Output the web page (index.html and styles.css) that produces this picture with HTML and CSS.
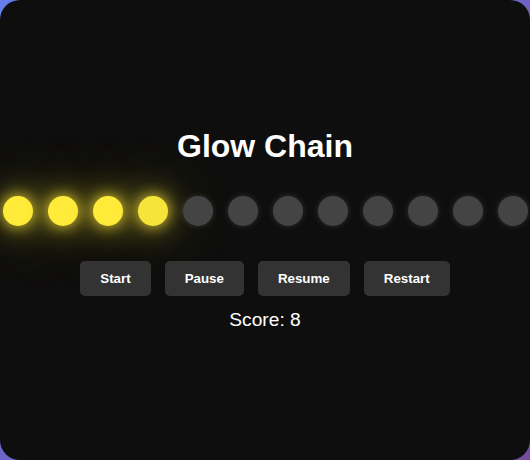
FILE: index.html
```html
<!DOCTYPE html>
<html lang="en">
<head>
<meta charset="utf-8">
<title>Glow Chain</title>
<link rel="stylesheet" href="styles.css">
</head>
<body>
<div class="app">
  <h1 class="title">Glow Chain</h1>
  <div class="chain">
    <span class="dot on"></span>
    <span class="dot on"></span>
    <span class="dot on"></span>
    <span class="dot on fading"></span>
    <span class="dot"></span>
    <span class="dot"></span>
    <span class="dot"></span>
    <span class="dot"></span>
    <span class="dot"></span>
    <span class="dot"></span>
    <span class="dot"></span>
    <span class="dot"></span>
  </div>
  <div class="controls">
    <button class="btn">Start</button>
    <button class="btn">Pause</button>
    <button class="btn">Resume</button>
    <button class="btn">Restart</button>
  </div>
  <p class="score">Score: 8</p>
</div>
</body>
</html>
```
FILE: styles.css
```css
html, body {
  margin: 0;
  height: 100%;
}
body {
  background: linear-gradient(135deg, #667eea 0%, #764ba2 100%);
  font-family: "Liberation Sans", Arial, sans-serif;
}
.app {
  height: 460px;
  width: 530px;
  box-sizing: border-box;
  background: #0e0e0e;
  border-radius: 20px;
  overflow: hidden;
  display: flex;
  flex-direction: column;
  align-items: center;
  justify-content: center;
  color: #fff;
}
.title {
  margin: 0 0 31px;
  font-size: 32px;
  font-weight: bold;
  line-height: normal;
}
.chain {
  display: flex;
  justify-content: center;
  gap: 15px;
  margin-bottom: 35px;
}
.dot {
  flex: none;
  width: 30px;
  height: 30px;
  border-radius: 50%;
  background: #444;
  box-shadow: 0 0 6px rgba(255, 255, 255, 0.15);
}
.dot.on {
  background: #ffeb3b;
  box-shadow: 0 0 15px rgba(255, 235, 59, 0.9), 0 0 35px rgba(255, 235, 59, 0.6), 0 0 70px rgba(255, 235, 59, 0.35);
}
.dot.fading {
  background: #f7e43a;
}
.controls {
  display: flex;
  gap: 14px;
  margin-bottom: 13px;
}
.btn {
  font-family: "Liberation Sans", Arial, sans-serif;
  font-size: 13.333px;
  font-weight: bold;
  color: #fff;
  background: #333;
  border: none;
  border-radius: 5px;
  padding: 10px 20px;
  line-height: normal;
}
.score {
  margin: 0 0 2px;
  font-size: 19.2px;
  line-height: normal;
}
```
